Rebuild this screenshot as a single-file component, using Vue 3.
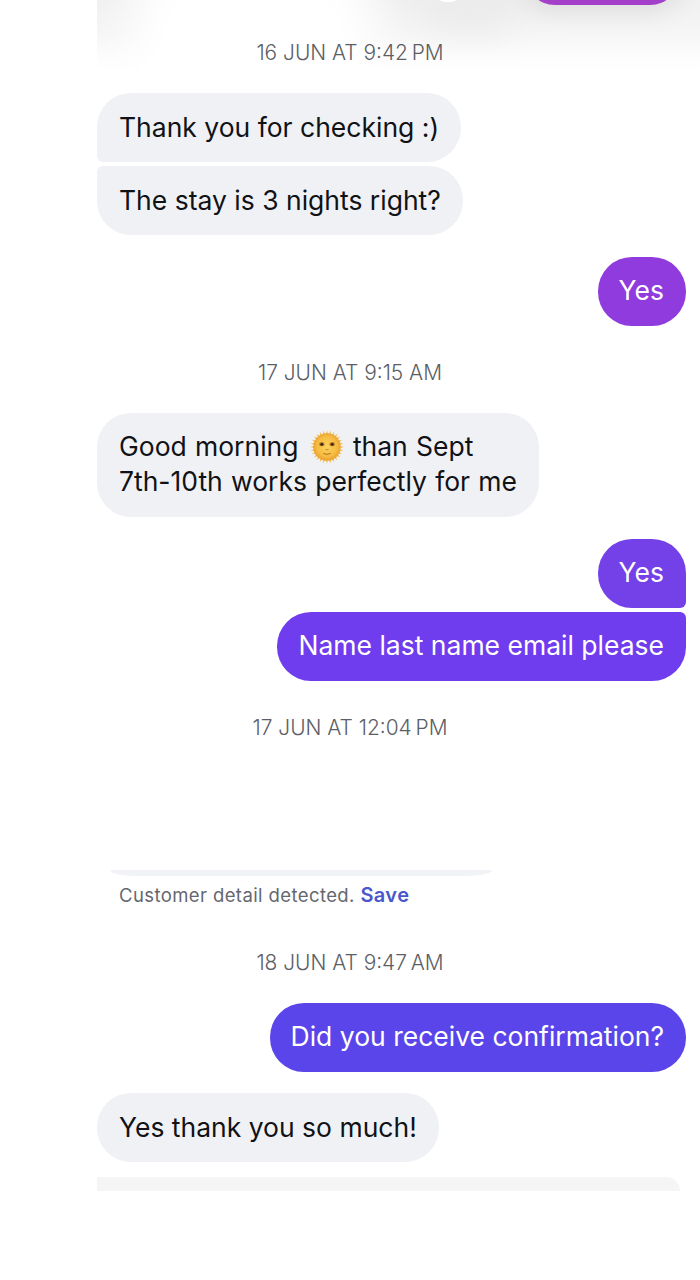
<script setup>
const firstBubbles = ['Thank you for checking :)', 'The stay is 3 nights right?']

// small triangular rays round the sun emoji
const sunRays = Array.from({ length: 28 }, (_, i) => (i * 360) / 28)
</script>

<template>
  <div class="page">
    <!-- faded header that scrolled under the top of the chat -->
    <div class="top-fade">
      <div class="ghost-left"></div>
      <div class="ghost-pill"></div>
      <div class="ghost-dot"></div>
      <div class="sliver"></div>
    </div>

    <div class="stamp">16 JUN AT 9:42&#8201;PM</div>

    <div class="group in">
      <div
        v-for="(text, i) in firstBubbles"
        :key="text"
        class="bubble incoming"
        :class="i === 0 ? 'tail-bottom' : 'tail-top'"
      >{{ text }}</div>
    </div>

    <div class="group out after-bubble">
      <div class="bubble outgoing yes-a">Yes</div>
    </div>

    <div class="stamp">17 JUN AT 9:15 AM</div>

    <div class="group in">
      <div class="bubble incoming morning">
        Good morning
        <svg class="sun" viewBox="0 0 36 36" aria-hidden="true">
          <defs>
            <radialGradient id="sunFace" cx="50%" cy="48%" r="52%">
              <stop offset="0%" stop-color="#fcd25c" />
              <stop offset="70%" stop-color="#f6bc42" />
              <stop offset="100%" stop-color="#e8a030" />
            </radialGradient>
          </defs>
          <polygon
            v-for="angle in sunRays"
            :key="angle"
            points="16.500,6 19.500,6 18,0.200"
            fill="#f3b945"
            :transform="`rotate(${angle} 18 18)`"
          />
          <circle cx="18" cy="18" r="14.500" fill="url(#sunFace)" />
          <ellipse cx="12.500" cy="15" rx="3" ry="2.200" fill="#c98a2c" />
          <ellipse cx="23.500" cy="15" rx="3" ry="2.200" fill="#c98a2c" />
          <circle cx="12.500" cy="15" r="1.600" fill="#3d2a10" />
          <circle cx="23.500" cy="15" r="1.600" fill="#3d2a10" />
          <path d="M16.400 20.500q1.600 1 3.200 0" fill="none" stroke="#c07f24" stroke-width="1" />
          <path d="M14.500 25q3.500 1.800 7 0" fill="none" stroke="#a96a20" stroke-width="1" stroke-linecap="round" />
        </svg>
        than Sept<br />7th-10th works perfectly for me
      </div>
    </div>

    <div class="group out after-bubble">
      <div class="bubble outgoing yes-b tail-out-bottom">Yes</div>
      <div class="bubble outgoing name tail-out-top">Name last name email please</div>
    </div>

    <div class="stamp">17 JUN AT 12:04&#8201;PM</div>

    <div class="detail-card"></div>
    <div class="detail-note">Customer detail detected. <a class="save">Save</a></div>

    <div class="stamp stamp-after-note">18 JUN AT 9:47&#8201;AM</div>

    <div class="group out">
      <div class="bubble outgoing confirm">Did you receive confirmation?</div>
    </div>

    <div class="group in after-out">
      <div class="bubble incoming">Yes thank you so much!</div>
    </div>

    <div class="cut-off"></div>
  </div>
</template>

<style scoped>
.page {
  position: relative;
  box-sizing: border-box;
  width: 700px;
  height: 1280px;
  padding-top: 6px;
  overflow: hidden;
  background: #fff;
  font-family: Inter, "Liberation Sans", sans-serif;
  color: #111216;
}

.top-fade {
  position: absolute;
  top: 0;
  left: 97px;
  right: 0;
  height: 72px;
  overflow: hidden;
  background: linear-gradient(#f0f0f0 0, #f6f6f6 34px, #fdfdfd 60px, #fff 72px);
}

.ghost-left {
  position: absolute;
  top: -40px;
  left: 36px;
  width: 240px;
  height: 140px;
  border-radius: 40px;
  background: #fff;
  filter: blur(24px);
}

.ghost-pill {
  position: absolute;
  top: -50px;
  left: 318px;
  width: 110px;
  height: 80px;
  border-radius: 40px;
  background: #ebebeb;
  filter: blur(16px);
}

.ghost-dot {
  position: absolute;
  top: -2px;
  left: 343px;
  width: 16px;
  height: 4px;
  border-radius: 50%;
  background: #fff;
}

.sliver {
  position: absolute;
  top: -60px;
  left: 428px;
  width: 155px;
  height: 65px;
  border-radius: 30px;
  background: #a33fc8;
  box-shadow: 0 8px 26px rgba(0, 0, 0, 0.08);
}

.stamp {
  position: relative;
  height: 24px;
  margin-top: 35px;
  margin-bottom: 28px;
  font-size: 20.9px;
  font-weight: 300;
  line-height: 24px;
  text-align: center;
  color: #5c5e66;
}

.stamp-after-note {
  margin-top: 44px;
}

.group {
  display: flex;
  flex-direction: column;
  gap: 4px;
}

.group.in {
  align-items: flex-start;
  margin-left: 97px;
}

.group.out {
  align-items: flex-end;
  margin-right: 14px;
}

.after-bubble {
  margin-top: 22px;
}

.after-out {
  margin-top: 21px;
}

.bubble {
  padding: 17px 22px;
  border-radius: 34px;
  font-size: 26.5px;
  line-height: 35px;
}

.incoming {
  background: #f0f1f5;
}

.morning {
  padding-bottom: 18px;
  padding-top: 16px;
  word-spacing: 0.75px;
}

.outgoing {
  padding: 16px 22px 18px 21px;
  color: #fff;
}

.tail-bottom {
  border-bottom-left-radius: 6px;
}

.tail-top {
  border-top-left-radius: 6px;
}

.tail-out-bottom {
  border-bottom-right-radius: 6px;
}

.tail-out-top {
  border-top-right-radius: 6px;
}

.yes-a {
  background: #8f3bdd;
}

.yes-b {
  background: #7440e8;
}

.name {
  background: #6f3cee;
}

.confirm {
  background: #5a45ea;
}

.sun {
  width: 34px;
  height: 34px;
  margin: -6px 1px -6px 3px;
  vertical-align: -2px;
}

.detail-card {
  width: 382px;
  height: 6px;
  margin-top: 130px;
  margin-left: 110px;
  border-radius: 0 0 26px 26px / 0 0 6px 6px;
  background: #f2f3f6;
}

.detail-note {
  margin-top: 7px;
  margin-left: 119px;
  font-size: 18.5px;
  line-height: 24px;
  letter-spacing: 0.4px;
  color: #65676e;
}

.save {
  font-size: 20px;
  font-weight: 600;
  color: #4a58cc;
}

.cut-off {
  width: 583px;
  height: 14px;
  margin-top: 15px;
  margin-left: 97px;
  border-radius: 4px 34px 0 0;
  background: #f5f5f6;
}
</style>

<style>
html, body {
  margin: 0;
  background: #fff;
}
</style>
